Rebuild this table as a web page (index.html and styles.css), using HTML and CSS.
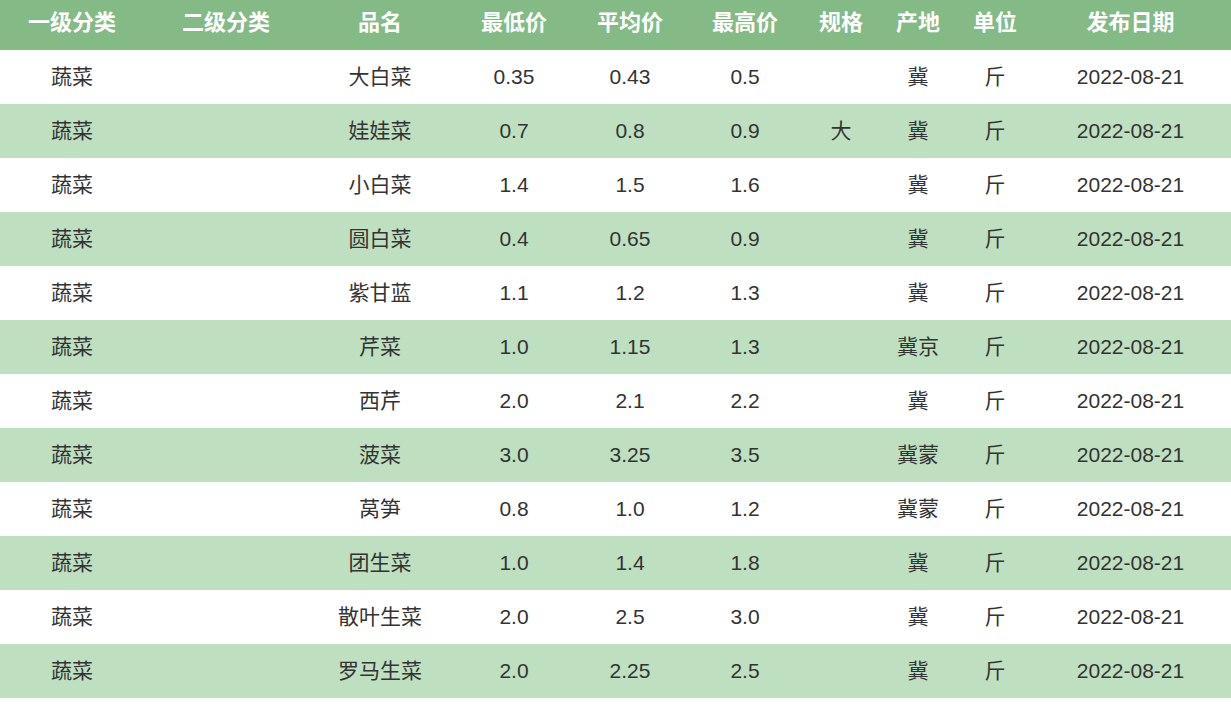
FILE: index.html
```html
<!DOCTYPE html>
<html lang="zh">
<head>
<meta charset="utf-8">
<title>蔬菜价格</title>
<link rel="stylesheet" href="styles.css">
</head>
<body>
<table class="price-table">
  <colgroup>
    <col class="c1"><col class="c2"><col class="c3"><col class="c4"><col class="c5">
    <col class="c6"><col class="c7"><col class="c8"><col class="c9"><col class="c10">
  </colgroup>
  <thead>
    <tr>
      <th>一级分类</th><th>二级分类</th><th>品名</th><th>最低价</th><th>平均价</th>
      <th>最高价</th><th>规格</th><th>产地</th><th>单位</th><th>发布日期</th>
    </tr>
  </thead>
  <tbody>
    <tr><td>蔬菜</td><td></td><td>大白菜</td><td>0.35</td><td>0.43</td><td>0.5</td><td></td><td>冀</td><td>斤</td><td>2022-08-21</td></tr>
    <tr><td>蔬菜</td><td></td><td>娃娃菜</td><td>0.7</td><td>0.8</td><td>0.9</td><td>大</td><td>冀</td><td>斤</td><td>2022-08-21</td></tr>
    <tr><td>蔬菜</td><td></td><td>小白菜</td><td>1.4</td><td>1.5</td><td>1.6</td><td></td><td>冀</td><td>斤</td><td>2022-08-21</td></tr>
    <tr><td>蔬菜</td><td></td><td>圆白菜</td><td>0.4</td><td>0.65</td><td>0.9</td><td></td><td>冀</td><td>斤</td><td>2022-08-21</td></tr>
    <tr><td>蔬菜</td><td></td><td>紫甘蓝</td><td>1.1</td><td>1.2</td><td>1.3</td><td></td><td>冀</td><td>斤</td><td>2022-08-21</td></tr>
    <tr><td>蔬菜</td><td></td><td>芹菜</td><td>1.0</td><td>1.15</td><td>1.3</td><td></td><td>冀京</td><td>斤</td><td>2022-08-21</td></tr>
    <tr><td>蔬菜</td><td></td><td>西芹</td><td>2.0</td><td>2.1</td><td>2.2</td><td></td><td>冀</td><td>斤</td><td>2022-08-21</td></tr>
    <tr><td>蔬菜</td><td></td><td>菠菜</td><td>3.0</td><td>3.25</td><td>3.5</td><td></td><td>冀蒙</td><td>斤</td><td>2022-08-21</td></tr>
    <tr><td>蔬菜</td><td></td><td>莴笋</td><td>0.8</td><td>1.0</td><td>1.2</td><td></td><td>冀蒙</td><td>斤</td><td>2022-08-21</td></tr>
    <tr><td>蔬菜</td><td></td><td>团生菜</td><td>1.0</td><td>1.4</td><td>1.8</td><td></td><td>冀</td><td>斤</td><td>2022-08-21</td></tr>
    <tr><td>蔬菜</td><td></td><td>散叶生菜</td><td>2.0</td><td>2.5</td><td>3.0</td><td></td><td>冀</td><td>斤</td><td>2022-08-21</td></tr>
    <tr><td>蔬菜</td><td></td><td>罗马生菜</td><td>2.0</td><td>2.25</td><td>2.5</td><td></td><td>冀</td><td>斤</td><td>2022-08-21</td></tr>
  </tbody>
</table>
</body>
</html>
```

FILE: styles.css
```css
html, body {
  margin: 0;
  padding: 0;
  background: #ffffff;
}

.price-table {
  width: 1231px;
  border-collapse: collapse;
  border-spacing: 0;
  table-layout: fixed;
  font-family: "Liberation Sans", "Noto Sans CJK SC", sans-serif;
  font-size: 21px;
  color: #333333;
}

.c1 { width: 144px; }
.c2 { width: 164px; }
.c3 { width: 144px; }
.c4 { width: 124px; }
.c5 { width: 108px; }
.c6 { width: 122px; }
.c7 { width: 70px; }
.c8 { width: 84px; }
.c9 { width: 70px; }
.c10 { width: 201px; }

.price-table thead tr {
  background: #83ba86;
  height: 50px;
}

.price-table th {
  color: #ffffff;
  font-weight: bold;
  font-size: 22px;
  text-align: center;
  padding: 0 0 4px 0;
  line-height: 1;
  white-space: nowrap;
}

.price-table tbody tr {
  height: 54px;
  background: #ffffff;
}

.price-table tbody tr:nth-child(even) {
  background: #bfdfc1;
}

.price-table td {
  text-align: center;
  padding: 0 0 2px 0;
  line-height: 1;
  white-space: nowrap;
}
```
